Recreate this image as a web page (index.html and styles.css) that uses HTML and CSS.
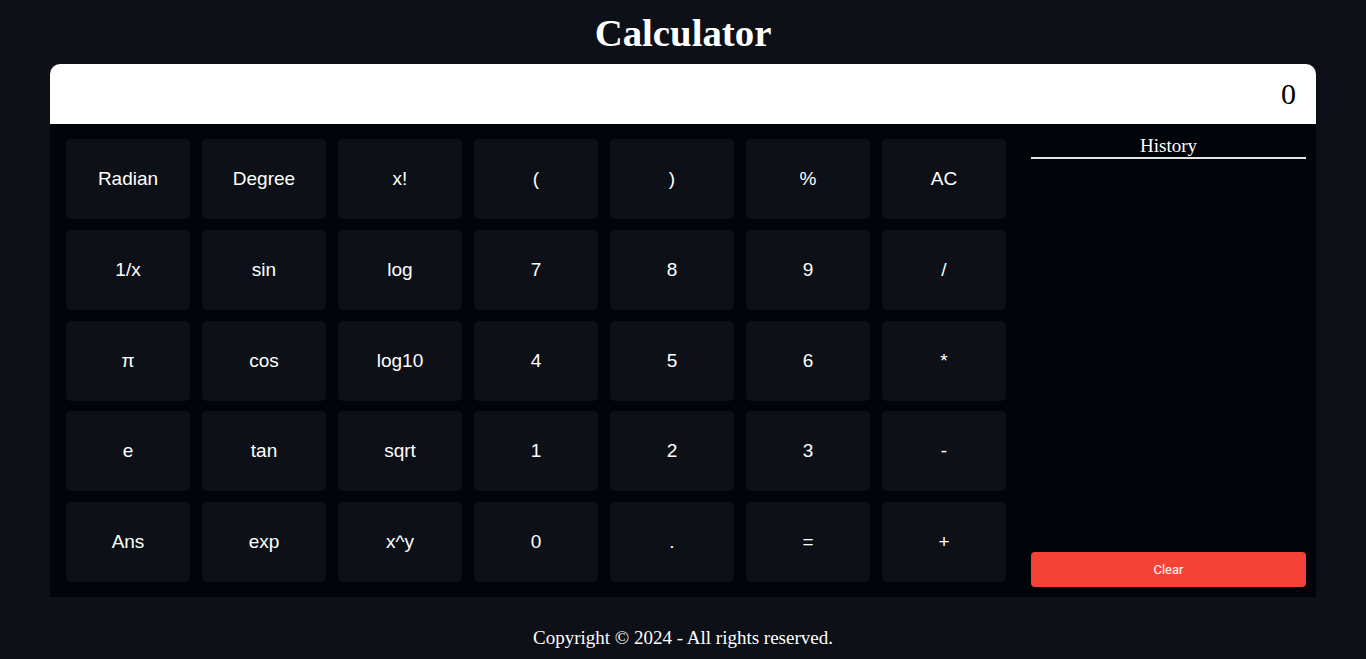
FILE: index.html
```html
<!DOCTYPE html>
<html>
<head>
<meta charset="utf-8">
<title>Calculator</title>
<link rel="stylesheet" href="styles.css">
</head>
<body>
<h1 class="title">Calculator</h1>
<div class="calc">
  <div class="display">0</div>
  <div class="main">
    <div class="keys">
      <button class="key">Radian</button>
      <button class="key">Degree</button>
      <button class="key">x!</button>
      <button class="key">(</button>
      <button class="key">)</button>
      <button class="key">%</button>
      <button class="key">AC</button>
      <button class="key">1/x</button>
      <button class="key">sin</button>
      <button class="key">log</button>
      <button class="key">7</button>
      <button class="key">8</button>
      <button class="key">9</button>
      <button class="key">/</button>
      <button class="key">π</button>
      <button class="key">cos</button>
      <button class="key">log10</button>
      <button class="key">4</button>
      <button class="key">5</button>
      <button class="key">6</button>
      <button class="key">*</button>
      <button class="key">e</button>
      <button class="key">tan</button>
      <button class="key">sqrt</button>
      <button class="key">1</button>
      <button class="key">2</button>
      <button class="key">3</button>
      <button class="key">-</button>
      <button class="key">Ans</button>
      <button class="key">exp</button>
      <button class="key">x^y</button>
      <button class="key">0</button>
      <button class="key">.</button>
      <button class="key">=</button>
      <button class="key">+</button>
    </div>
    <div class="history">
      <div class="history-title">History</div>
      <div class="history-list"></div>
      <button class="clear">Clear</button>
    </div>
  </div>
</div>
<footer class="footer">Copyright © 2024 - All rights reserved.</footer>
</body>
</html>
```

FILE: styles.css
```css
html, body {
  margin: 0;
  padding: 0;
  background: #0d1017;
  color: #ffffff;
  font-family: "Liberation Serif", "Times New Roman", serif;
}

.title {
  margin: 0;
  padding-top: 11px;
  height: 64px;
  box-sizing: border-box;
  text-align: center;
  font-size: 38.8px;
  line-height: 44px;
  font-weight: bold;
}

.calc {
  margin: 0 50px;
}

.display {
  height: 60px;
  background: #ffffff;
  color: #000000;
  border-radius: 10px 10px 0 0;
  text-align: right;
  padding: 0 20px;
  font-size: 30px;
  line-height: 60px;
}

.main {
  display: flex;
  gap: 25px;
  background: #010409;
  padding: 15px 10px 15px 16px;
}

.keys {
  display: grid;
  grid-template-columns: repeat(7, 124px);
  grid-auto-rows: 80px;
  column-gap: 12px;
  row-gap: 10.75px;
}

.key {
  background: #0d1117;
  color: #ffffff;
  border: none;
  border-radius: 5px;
  font-family: "Liberation Sans", Arial, sans-serif;
  font-size: 19px;
  padding: 0;
}

.history {
  flex: 1;
  display: flex;
  flex-direction: column;
  margin-bottom: -5px;
}

.history-title {
  margin-top: -5px;
  text-align: center;
  font-size: 19px;
  line-height: 23px;
  border-bottom: 2px solid #e6e6e6;
}

.history-list {
  flex: 1;
}

.clear {
  height: 35px;
  background: #f44336;
  color: #ffffff;
  border: none;
  border-radius: 4px;
  font-family: Roboto, "Liberation Sans", sans-serif;
  font-size: 13px;
  font-weight: 400;
}

.footer {
  text-align: center;
  font-size: 19px;
  padding-top: 30px;
  line-height: 22px;
}
```
